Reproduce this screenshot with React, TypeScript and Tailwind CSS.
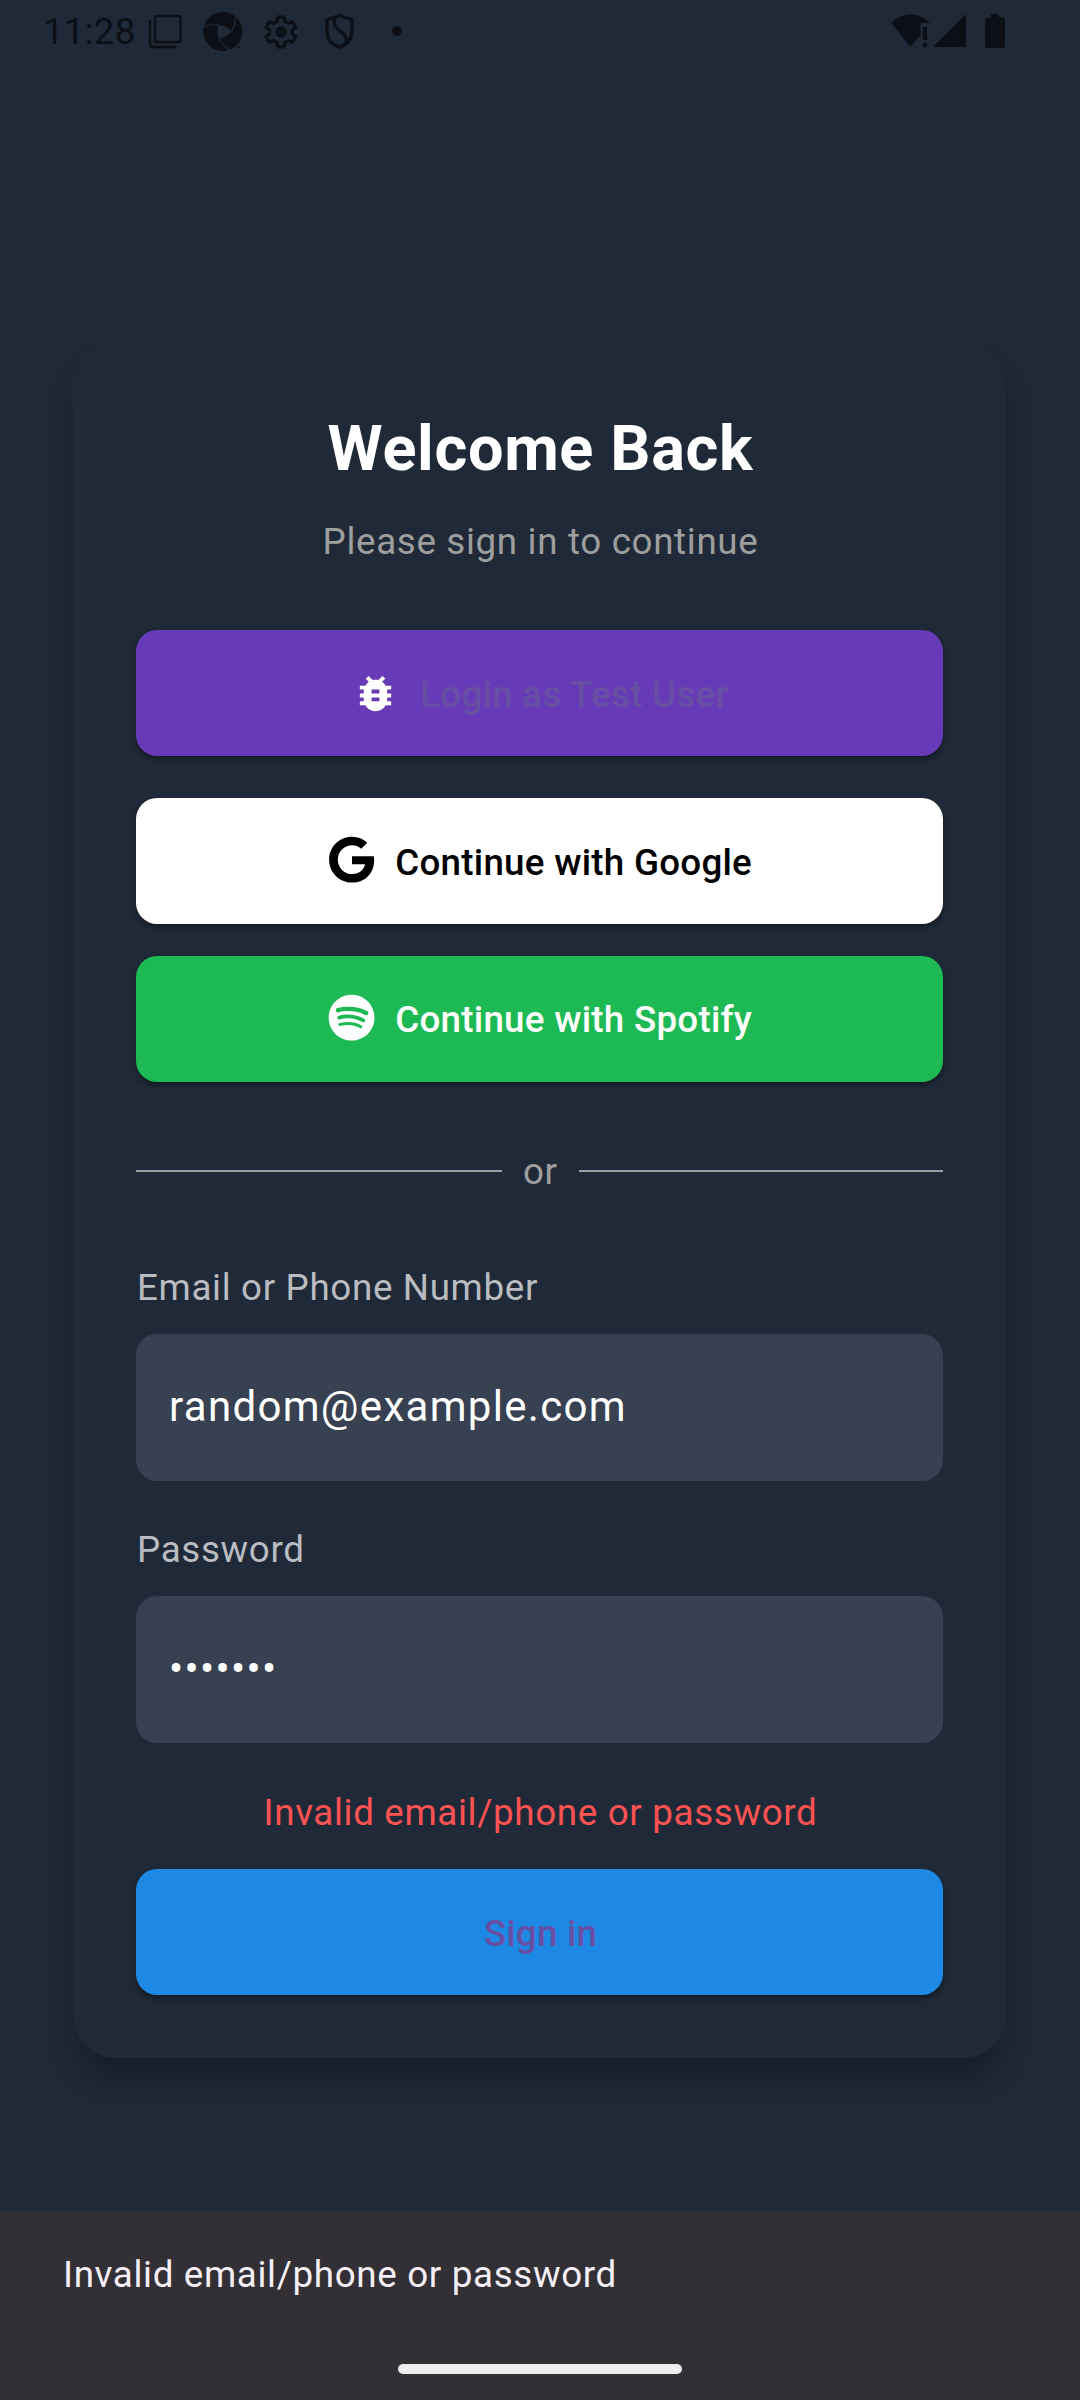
import { FaGoogle, FaSpotify } from "react-icons/fa6";
import { MdBugReport } from "react-icons/md";
import type { ReactNode } from "react";

const INK = "#0c0f16";

function StatusBar() {
  return (
    <header className="flex h-[63px] items-start justify-between pr-[75px] pl-[43px]">
      <div className="flex items-start">
        <span className="mr-[12px] w-[93px] pt-[10px] text-[36.75px] leading-[43px] tracking-[0.2px] whitespace-nowrap text-[#0c0f16]">11:28</span>
        <svg className="mt-[14px] h-[36px] w-[34px]" viewBox="148 14 34 36" fill="none" stroke={INK} strokeWidth="2.300">
          <rect x="155" y="16" width="25.5" height="26" rx="1.5" />
          <path d="M150 20v26q0 1 1 1h25" />
        </svg>
        <svg className="mt-[11px] ml-[20px] h-[41px] w-[42px]" viewBox="202 11 42 41">
          <circle cx="222.8" cy="31.5" r="19.5" fill={INK} />
          <path d="M218.300 25Q226 25.500 231.500 31.300Q226 37.500 219.500 39.300Q216 32 218.300 25z" fill="#1f2937" />
          <path d="M203.700 27Q211 23.500 219 25M235.300 16.500Q235.500 25 231.500 31.500M218.800 38.500Q222 45.500 230 49.500" fill="none" stroke="#1f2937" strokeWidth="1.300" />
          <path d="M237 47.300h3" stroke={INK} strokeWidth="1.200" />
        </svg>
        <svg className="mt-[12px] ml-[17px] h-[40px] w-[40px]" viewBox="0 0 24 24" fill="none" stroke={INK} strokeWidth="1.900" strokeLinejoin="round">
          <path d="M10.100 3h3.800l.5 2.700 2 1.150 2.600-.95 1.900 3.300-2.100 1.750v2.100l2.100 1.750-1.900 3.300-2.600-.95-2 1.150-.5 2.700h-3.800l-.5-2.700-2-1.150-2.600.95-1.900-3.300 2.100-1.750v-2.100L3.100 9.200 5 5.900l2.600.95 2-1.150z" />
          <circle cx="12" cy="12" r="3.400" fill={INK} stroke="none" />
        </svg>
        <svg className="mt-[12px] ml-[21px] h-[40px] w-[34px]" viewBox="322 12 34 40" fill="none" stroke={INK} strokeWidth="3.200" strokeLinejoin="round">
          <path d="M339.500 15.500l12.500 4.300v11.200c0 8-5 13.700-12.500 16.300-7.500-2.600-12.500-8.300-12.500-16.300V19.800z" />
          <path d="M335.500 17.500c-2.500 5-1.500 8 2 11l6 5.300c3.500 3.200 3.500 7 1.500 11" />
        </svg>
        <span className="mt-[26px] ml-[36px] size-[10px] rounded-full bg-[#0c0f16]" />
      </div>
      <svg className="mt-[13px] h-[36px] w-[115px]" viewBox="890 13 115 36" fill={INK}>
        <path d="M891 22.700Q910.500 6 930 22.700H920.500V35L910.500 47z" />
        <path d="M923 27h4v13h-4zM923 43h4v4h-4zM966 14v33h-33z" />
        <path d="M991 14h8v3.500h4q2 0 2 2V46q0 2-2 2h-16q-2 0-2-2V19.500q0-2 2-2h4z" />
      </svg>
    </header>
  );
}

function ActionButton({ className, children }: { className: string; children: ReactNode }) {
  return (
    <button
      className={`flex h-[126px] w-full shrink-0 items-center justify-center rounded-[21px] text-[36.75px] leading-[52px] font-medium tracking-[0.26px] whitespace-nowrap shadow-[0_3px_5px_rgba(0,0,0,0.4)] ${className}`}
    >
      {children}
    </button>
  );
}

function Field({ label, children, className }: { label: string; className: string; children: ReactNode }) {
  return (
    <div className={`flex flex-col ${className}`}>
      <label className="pl-px text-[36.75px] leading-[52px] tracking-[0.66px] text-[#b9bcc1]">{label}</label>
      <div className="mt-[20px] flex h-[147px] items-center rounded-[21px] bg-[#374151] px-[33px] pb-[2px] text-[42px] leading-[63px] tracking-[1.31px] text-white">
        {children}
      </div>
    </div>
  );
}

export default function App() {
  return (
    <div className="flex h-[2400px] w-[1080px] flex-col overflow-hidden bg-[#1f2937] font-[Roboto,sans-serif]">
      <StatusBar />
      <main className="flex grow pt-[278px] pl-[73px]">
        <section className="flex h-[1717px] w-[933px] flex-col rounded-[42px] bg-[#1f2937] px-[63px] pt-[66px] shadow-[0_24px_30px_-4px_rgba(0,0,0,0.28)]">
          <h1 className="pl-[2px] text-center text-[63px] leading-[84px] font-bold tracking-[0.66px] text-white">Welcome Back</h1>
          <p className="mt-[25px] pl-[2px] text-center text-[36.75px] leading-[52px] tracking-[0.66px] text-[#9e9e9e]">Please sign in to continue</p>
          <ActionButton className="mt-[62px] gap-[21px] bg-[#673ab7] pl-[2px] text-[#6750a4]">
            <MdBugReport className="size-[47px] text-white" />
            <span className="pt-[4px]">Login as Test User</span>
          </ActionButton>
          <ActionButton className="mt-[42px] gap-[20px] bg-white pl-px text-black">
            <FaGoogle className="mb-[2px] size-[47.250px]" />
            <span className="pt-[4px]">Continue with Google</span>
          </ActionButton>
          <ActionButton className="mt-[32px] gap-[20px] bg-[#1db954] pl-px text-white">
            <FaSpotify className="mb-[2px] size-[47.250px]" />
            <span className="pt-[2px]">Continue with Spotify</span>
          </ActionButton>
          <div className="mt-[63px] flex h-[52px] items-center gap-[21px]">
            <span className="h-[2px] w-[366px] bg-[#9e9e9e]" />
            <span className="pt-[2px] text-[36.75px] leading-[52px] tracking-[0.66px] text-[#9e9e9e]">or</span>
            <span className="h-[2px] grow bg-[#9e9e9e]" />
          </div>
          <Field label="Email or Phone Number" className="mt-[65px]">
            random@example.com
          </Field>
          <Field label="Password" className="mt-[43px]">
            •••••••
          </Field>
          <p className="mt-[44px] pl-[2px] text-center text-[36.75px] leading-[52px] tracking-[0.66px] text-[#ff5252]">Invalid email/phone or password</p>
          <ActionButton className="mt-[30px] bg-[#1e88e5] text-[#6750a4]">
            <span className="pt-[4px] pl-[2px]">Sign in</span>
          </ActionButton>
        </section>
      </main>
      <footer className="flex h-[189px] shrink-0 flex-col items-center bg-[#322f35]">
        <p className="w-full pt-[38px] pl-[63px] text-[36.75px] leading-[52px] tracking-[0.66px] text-[#f5eff7]">Invalid email/phone or password</p>
        <div className="mt-[63px] h-[10px] w-[284px] rounded-full bg-[#eeeeee]" />
      </footer>
    </div>
  );
}
